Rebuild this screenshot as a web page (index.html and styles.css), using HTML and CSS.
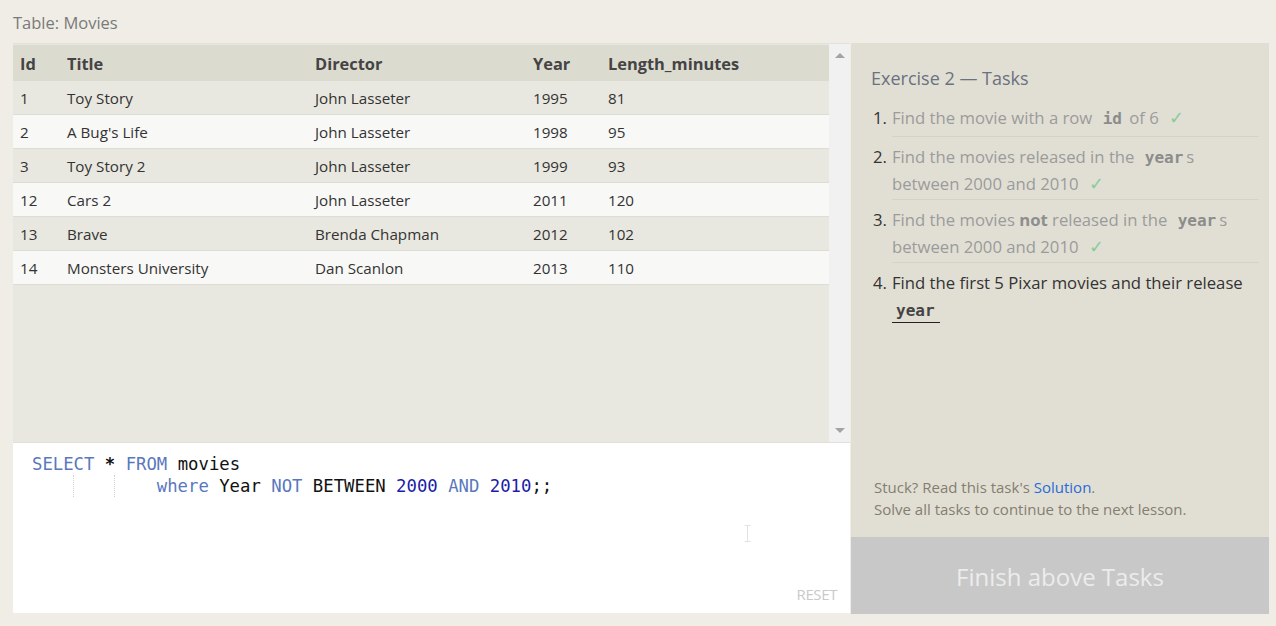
FILE: index.html
```html
<!DOCTYPE html>
<html>
<head>
<meta charset="utf-8">
<link rel="stylesheet" href="styles.css">
</head>
<body>
<div class="page">
  <div class="caption">Table: Movies</div>
  <div class="main">
    <div class="left">
      <div class="table-panel">
        <div class="table-scroll">
          <table class="grid">
            <thead>
              <tr><th class="c-id">Id</th><th class="c-title">Title</th><th class="c-dir">Director</th><th class="c-year">Year</th><th>Length_minutes</th></tr>
            </thead>
            <tbody>
              <tr><td>1</td><td>Toy Story</td><td>John Lasseter</td><td>1995</td><td>81</td></tr>
              <tr><td>2</td><td>A Bug's Life</td><td>John Lasseter</td><td>1998</td><td>95</td></tr>
              <tr><td>3</td><td>Toy Story 2</td><td>John Lasseter</td><td>1999</td><td>93</td></tr>
              <tr><td>12</td><td>Cars 2</td><td>John Lasseter</td><td>2011</td><td>120</td></tr>
              <tr><td>13</td><td>Brave</td><td>Brenda Chapman</td><td>2012</td><td>102</td></tr>
              <tr><td>14</td><td>Monsters University</td><td>Dan Scanlon</td><td>2013</td><td>110</td></tr>
            </tbody>
          </table>
        </div>
        <div class="scrollbar">
          <span class="arrow up"></span>
          <span class="arrow down"></span>
        </div>
      </div>
      <div class="editor">
        <div class="code">
          <div class="line"><span class="kw">SELECT</span> <span class="op">*</span> <span class="kw">FROM</span> movies</div>
          <div class="line"><span class="indent"></span><span class="indent"></span><span class="indent last"></span><span class="kw">where</span> Year <span class="kw">NOT</span> BETWEEN <span class="num">2000</span> <span class="kw">AND</span> <span class="num">2010</span>;;</div>
        </div>
        <svg class="ibeam" width="7" height="17" viewBox="0 0 7 17"><path d="M0.5 0.5h6M0.5 16.5h6M3.5 0.5v16" stroke="#e2e2e2" stroke-width="1" fill="none"/></svg>
        <div class="reset">RESET</div>
      </div>
    </div>
    <div class="right">
      <div class="tasks">
        <h2 class="tasks-title">Exercise 2 — Tasks</h2>
        <ol class="task-list">
          <li class="done first"><span class="num-l">1.</span><div class="t">Find the movie with a row <code>id</code> of 6 <span class="check">✓</span></div></li>
          <li class="done"><span class="num-l">2.</span><div class="t">Find the movies released in the <code>year</code>s between 2000 and 2010 <span class="check">✓</span></div></li>
          <li class="done"><span class="num-l">3.</span><div class="t">Find the movies <b>not</b> released in the <code>year</code>s between 2000 and 2010 <span class="check">✓</span></div></li>
          <li class="active"><span class="num-l">4.</span><div class="t">Find the first 5 Pixar movies and their release <code class="ul">year</code></div></li>
        </ol>
        <div class="help">
          <div>Stuck? Read this task's <a class="sol">Solution</a>.</div>
          <div>Solve all tasks to continue to the next lesson.</div>
        </div>
      </div>
      <div class="finish">Finish above Tasks</div>
    </div>
  </div>
</div>
</body>
</html>
```

FILE: styles.css
```css
html, body {
  margin: 0;
  padding: 0;
  background: #efede5;
}
body {
  font-family: "Open Sans", "Liberation Sans", sans-serif;
  color: #333;
}
.page {
  padding: 10px 7px 12px 13px;
  width: 1256px;
}
.caption {
  font-size: 16.5px;
  color: #7a7a7a;
  height: 33px;
  line-height: 25px;
}
.main {
  display: flex;
  height: 571px;
}
.left {
  width: 837px;
  display: flex;
  flex-direction: column;
}
.table-panel {
  height: 398px;
  display: flex;
  background: #e9e8e0;
  border-top: 1px solid #e3e1d8;
}
.table-scroll {
  flex: 1;
  padding-top: 1px;
}
.grid {
  width: 100%;
  border-collapse: collapse;
  font-size: 15.2px;
}
.grid th {
  text-align: left;
  font-weight: 700;
  font-size: 16.4px;
  color: #444;
  background: #dcdbd0;
  height: 36px;
  padding: 0 0 0 7px;
}
.grid td {
  height: 33px;
  padding: 0 0 0 7px;
  border-bottom: 1px solid #dddcd5;
  color: #333;
}
.grid tbody tr:nth-child(odd) td { background: #e9e8e0; }
.grid tbody tr:nth-child(even) td { background: #f8f8f7; }
.c-id { width: 40px; }
.c-title { width: 241px; }
.c-dir { width: 211px; }
.c-year { width: 68px; }
.scrollbar {
  width: 21px;
  background: #f1f1f1;
  position: relative;
}
.arrow {
  position: absolute;
  left: 6px;
  width: 0;
  height: 0;
  border-left: 5px solid transparent;
  border-right: 5px solid transparent;
}
.arrow.up { top: 9px; border-bottom: 5px solid #a3a3a3; }
.arrow.down { bottom: 9px; border-top: 5px solid #a3a3a3; }
.editor {
  height: 171px;
  background: #fff;
  border-top: 1px solid #e2e0d6;
  position: relative;
  box-sizing: border-box;
}
.code {
  padding: 10px 0 0 19px;
  font-family: "DejaVu Sans Mono", "Liberation Mono", monospace;
  font-size: 17.3px;
  line-height: 22px;
  color: #111;
}
.line { white-space: pre; height: 22px; }
.indent {
  display: inline-block;
  vertical-align: top;
  width: 41.6px;
  height: 22px;
  box-sizing: border-box;
  border-right: 1px dotted #d0d0d0;
}
.indent.last { border-right: 0; }
.kw { color: #5a78bd; }
.op { color: #111; font-weight: 700; }
.num { color: #1c1ca8; }
.ibeam {
  position: absolute;
  left: 731px;
  top: 82px;
}
.reset {
  position: absolute;
  right: 13px;
  bottom: 9px;
  font-size: 15px;
  color: #c9c9c9;
  letter-spacing: -0.4px;
}
.right {
  width: 418px;
  margin-left: 1px;
  display: flex;
  flex-direction: column;
  background: #e1dfd4;
}
.tasks {
  flex: 1;
  padding: 22px 10px 0 20px;
  display: flex;
  flex-direction: column;
}
.tasks-title {
  margin: 0;
  font-size: 18px;
  font-weight: 400;
  color: #6b7180;
  line-height: 26px;
}
.task-list {
  list-style: none;
  margin: 13px 0 0 0;
  padding: 0;
  font-size: 16.7px;
  line-height: 27px;
}
.task-list li {
  display: flex;
}
.num-l {
  width: 21px;
  flex: none;
  color: #333;
  padding-left: 2px;
  box-sizing: border-box;
}
.t {
  flex: 1;
  padding-bottom: 2px;
  border-bottom: 1px solid #d5d3c8;
  margin-bottom: 6px;
}
.first .t { padding-bottom: 5px; }
.task-list li.active .t { border-bottom: 0; color: #333; }
.done .t { color: #9b9b9b; }
.done b { color: #8e8e8e; }
code {
  font-family: "DejaVu Sans Mono", "Liberation Mono", monospace;
  font-weight: 700;
  font-size: 16px;
  line-height: 16px;
  padding: 0 3px 0 6px;
  color: #8c8c8c;
}
code.ul {
  color: #444;
  display: inline-block;
  border-bottom: 1px solid #222;
  padding: 0 5px 0 4px;
  line-height: 22px;
}
.check {
  color: #89cc9a;
  margin-left: 6px;
  font-size: 18px;
  line-height: 16px;
}
.help {
  margin-top: auto;
  padding: 0 0 17px 3px;
  font-size: 15px;
  line-height: 22px;
  color: #857d70;
}
.sol { color: #2a6ad8; }
.finish {
  height: 77px;
  background: #c8c8c8;
  color: #ececec;
  font-size: 24px;
  display: flex;
  align-items: center;
  justify-content: center;
  padding-top: 1px;
  box-sizing: border-box;
}
```
